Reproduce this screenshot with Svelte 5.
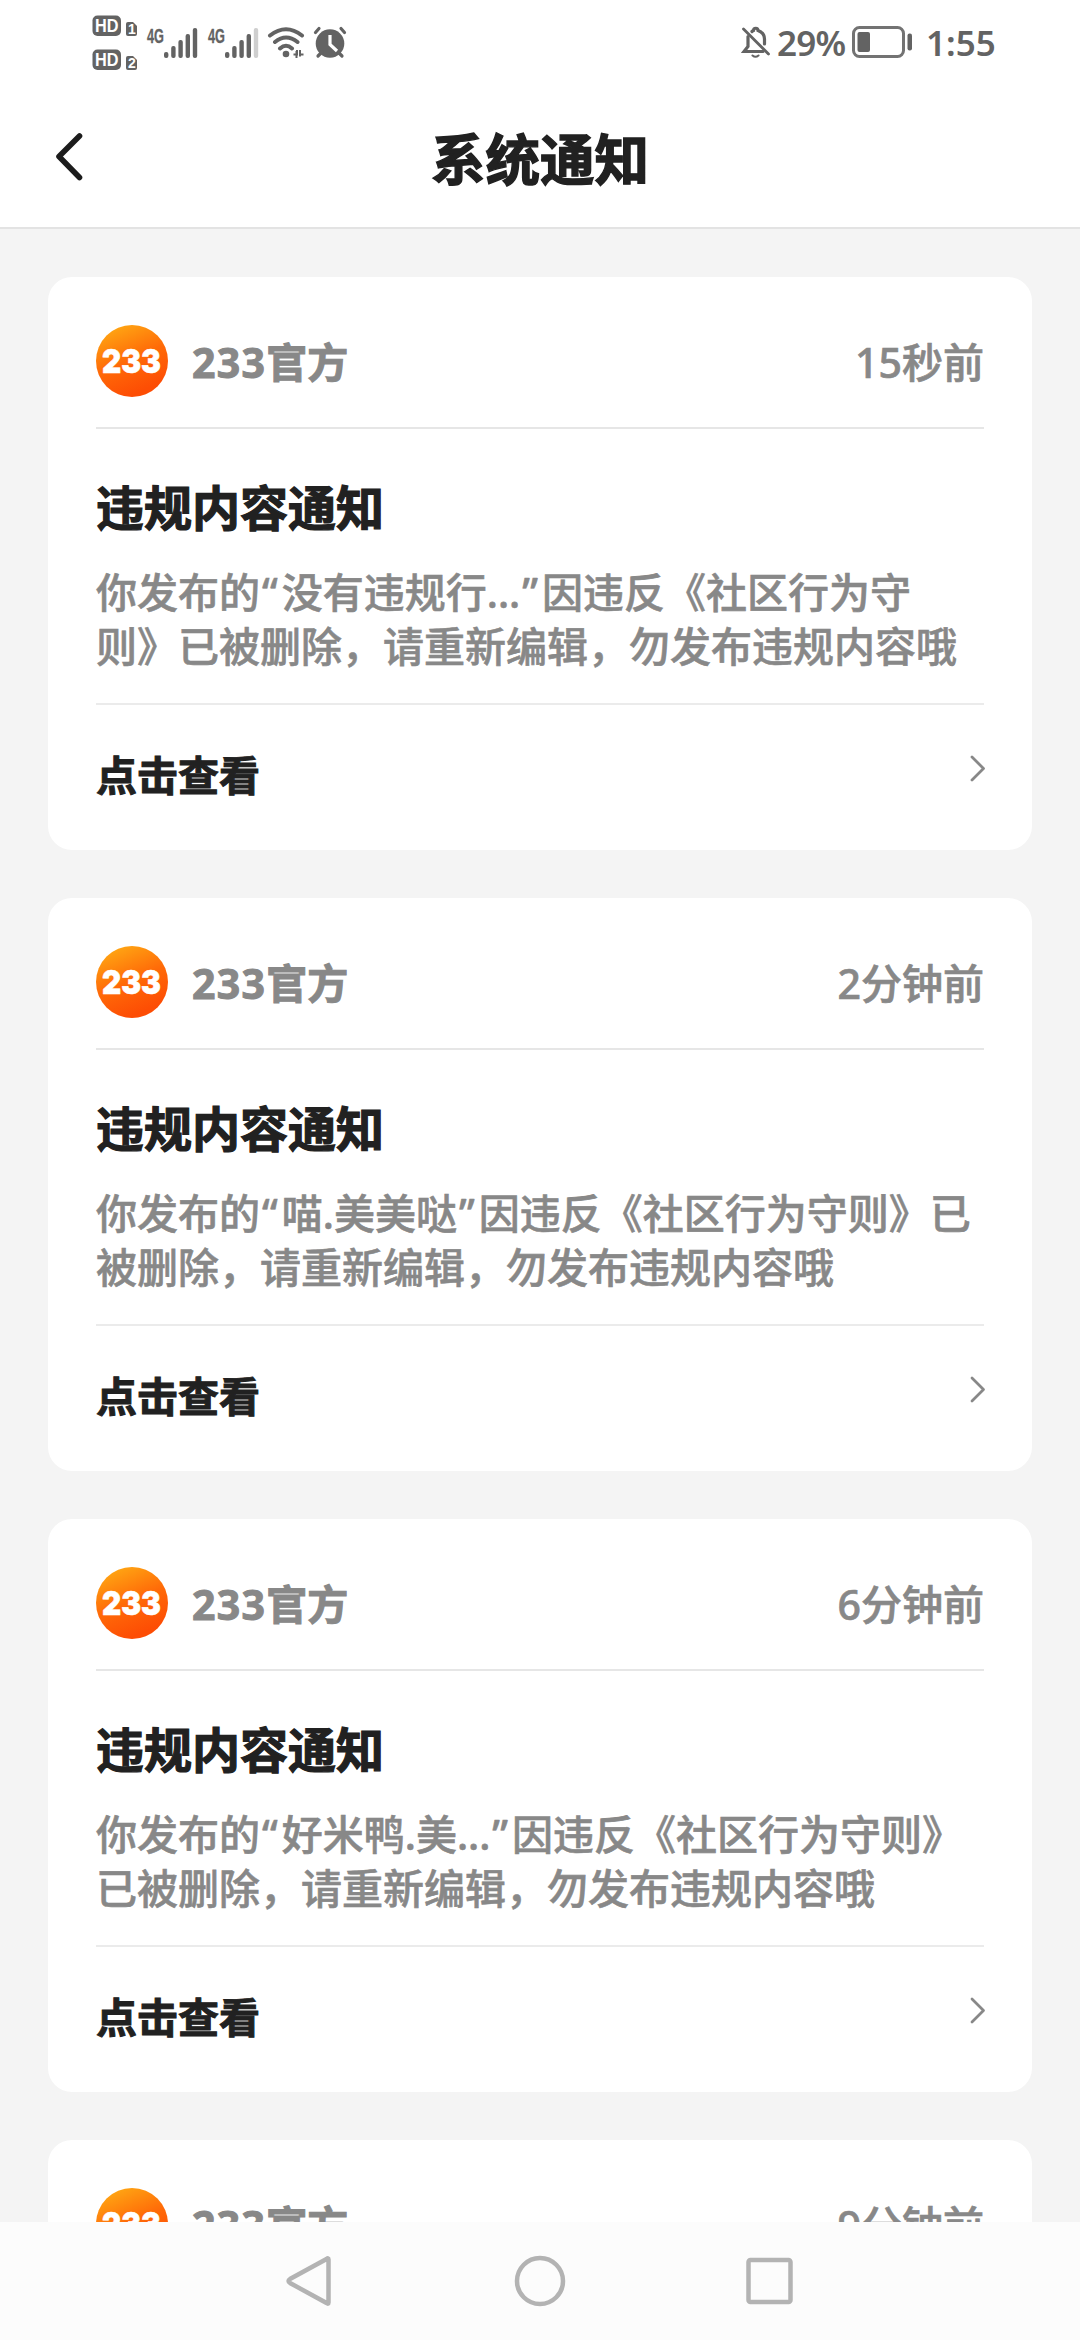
<script>
  const cards = [
    { time: '15秒前', lines: ['你发布的“没有违规行...”因违反《社区行为守', '则》已被删除，请重新编辑，勿发布违规内容哦'] },
    { time: '2分钟前', lines: ['你发布的“喵.美美哒”因违反《社区行为守则》已', '被删除，请重新编辑，勿发布违规内容哦'] },
    { time: '6分钟前', lines: ['你发布的“好米鸭.美...”因违反《社区行为守则》', '已被删除，请重新编辑，勿发布违规内容哦'] },
    { time: '9分钟前', lines: [] }
  ];
  const bars = [0, 1, 2, 3, 4];
  const parts = (line) => line.split(/([“”])/).filter(Boolean);
  const isQuote = (s) => s === '“' || s === '”';
</script>

{#snippet signal(weak)}
  <svg class="signal" width="54" height="34" viewBox="0 0 54 34">
    <text class="net" x="1" y="17.5" textLength="17" lengthAdjust="spacingAndGlyphs">4G</text>
    {#each bars as i}
      <rect x={18 + i * 7.2} y={27 - i * 6} width="4.4" height={6 + i * 6} rx="2" fill={weak && i === 4 ? '#cfcfcf' : '#636363'} />
    {/each}
  </svg>
{/snippet}

<div class="screen">
  <header class="status">
    <div class="group">
      <svg class="hd" width="44" height="56" viewBox="0 0 44 56">
        {#each ['1', '2'] as n, i}
          <g transform="translate(0 {i * 34})">
            <rect x="0.5" y="0.5" width="28.5" height="20.5" rx="5" fill="#636363" />
            <text class="hdt" x="3" y="17" textLength="23.5" lengthAdjust="spacingAndGlyphs">HD</text>
            <path d="M36 7h5l4 4v8a2 2 0 0 1-2 2h-7a2 2 0 0 1-2-2v-10a2 2 0 0 1 2-2z" fill="#636363" />
            <text class="sim" x="36" y="19">{n}</text>
          </g>
        {/each}
      </svg>
      {@render signal(false)}
      {@render signal(true)}
      <svg class="wifi" width="38" height="34" viewBox="0 0 38 34" fill="none" stroke="#636363" stroke-width="4" stroke-linecap="round">
        <path d="M3 10.5Q19-2 35 10.5M8 17Q19 8 30.5 17M13 23.5Q19 18 25 23.5" />
        <circle cx="19" cy="29" r="3.3" fill="#636363" stroke="none" />
        <path d="M26.5 29.5h3.500v-4.500M29.500 26v7M33 25v6.500M33 29.500h3.500" stroke-width="2" stroke-linecap="butt" />
      </svg>
      <svg class="alarm" width="34" height="34" viewBox="0 0 34 34" fill="none" stroke="#636363" stroke-width="3.200" stroke-linecap="round">
        <circle cx="17" cy="18.500" r="14.300" fill="#636363" stroke="none" />
        <path d="M2.500 7.500L6 3.500M31.500 7.500L28 3.500M5 31l4-4M29 31l-4-4" />
        <path d="M17 10v9.500l7 6.500" stroke="#fff" stroke-width="3.200" stroke-linecap="butt" />
      </svg>
    </div>
    <div class="group">
      <svg width="30" height="34" viewBox="0 0 30 34" fill="none" stroke="#636363" stroke-width="3.200" stroke-linecap="round">
        <path d="M7 11.500V21.500L3 26.500H22M11 6.500C11.500 6 12 5.700 12.500 5.500C12.500 2.500 17 2.500 17 5.500C21 7 23.500 10 23.500 14V19" />
        <path d="M2.500 4L27.500 29" stroke-width="2.800" />
        <path d="M11.500 30.500Q14.500 33 17.500 30.500" stroke-width="2" />
      </svg>
      <span class="pct">29%</span>
      <svg class="battery" width="62" height="34" viewBox="0 0 62 34">
        <rect x="2.500" y="2.500" width="50" height="29" rx="6" fill="none" stroke="#737373" stroke-width="3" />
        <rect x="6.500" y="7" width="12.500" height="20" rx="2" fill="#636363" />
        <rect x="56.500" y="8.500" width="4.500" height="17" rx="2" fill="#636363" />
      </svg>
      <span class="clock">1:55</span>
    </div>
  </header>

  <nav class="titlebar">
    <svg class="back" width="30" height="52" viewBox="0 0 30 52">
      <path d="M25.500 5L5 25.500L25.500 46.500" fill="none" stroke="#1c1c1c" stroke-width="5.600" stroke-linecap="round" stroke-linejoin="round" />
    </svg>
    <h1>系统通知</h1>
  </nav>

  <main>
    {#each cards as card}
      <article class="card">
        <div class="head">
          <svg class="avatar" width="72" height="72" viewBox="0 0 72 72">
            <defs>
              <linearGradient id="orange" x1="0.150" y1="0" x2="0.550" y2="0.950">
                <stop offset="0" stop-color="#ffad14" />
                <stop offset="0.550" stop-color="#ff6a08" />
                <stop offset="1" stop-color="#fd4d04" />
              </linearGradient>
            </defs>
            <circle cx="36" cy="36" r="36" fill="url(#orange)" />
            <text class="logo" x="6" y="48" textLength="59" lengthAdjust="spacingAndGlyphs">233</text>
          </svg>
          <span class="name"><b>233</b>官方</span>
          <time>{card.time}</time>
        </div>
        {#if card.lines.length}
          <div class="body">
            <h2>违规内容通知</h2>
            <p>{#each card.lines as line}<span class="line">{#each parts(line) as part}<span class:quote={isQuote(part)}>{part}</span>{/each}</span>{/each}</p>
          </div>
          <div class="foot">
            <span>点击查看</span>
            <svg class="more" width="18" height="30" viewBox="0 0 18 30">
              <path d="M4 4L15.500 15.500L4 27" fill="none" stroke="#888" stroke-width="2.800" stroke-linecap="round" stroke-linejoin="round" />
            </svg>
          </div>
        {/if}
      </article>
    {/each}
  </main>

  <footer>
    <svg width="52" height="52" viewBox="0 0 52 52"><path d="M44.500 4.500V47.500Q44.500 49.500 42.500 48L6 28Q3 26 6 24L42.500 4Q44.500 2.500 44.500 4.500Z" /></svg>
    <svg width="52" height="52" viewBox="0 0 52 52"><circle cx="26" cy="26" r="23" /></svg>
    <svg width="52" height="52" viewBox="0 0 52 52"><rect x="4.500" y="5" width="42" height="42" rx="2" /></svg>
  </footer>
</div>

<style>
  :global(body) { margin: 0; }
  .screen {
    width: 1080px; height: 2340px; overflow: hidden;
    display: flex; flex-direction: column;
    background: #f4f4f4; color: #212121;
    font-family: "Noto Sans", "Noto Sans CJK SC", sans-serif;
  }
  .status {
    height: 84px; flex: none; box-sizing: border-box; background: #fff; color: #636363;
    display: flex; justify-content: space-between; padding: 0 86px 0 92px;
  }
  .group { display: flex; align-items: center; }
  .hd { overflow: visible; margin-right: 10px; margin-top: 2px; }
  .signal { margin-right: 7px; }
  .wifi { margin-right: 8px; margin-left: -1px; }
  .net { font: 700 20px "Liberation Sans", sans-serif; fill: #636363; stroke: #636363; stroke-width: 0.3px; }
  .hdt { font: 700 19px "Liberation Sans", sans-serif; fill: #fff; }
  .sim { font: 700 14px "Liberation Sans", sans-serif; fill: #fff; }
  .pct, .clock { font-size: 35px; font-weight: 600; line-height: 44px; margin-top: 2px; white-space: nowrap; }
  .pct { width: 74px; margin-left: 6px; letter-spacing: -0.8px; }
  .clock { width: 68px; margin-left: 13px; }
  .titlebar {
    height: 145px; flex: none; box-sizing: border-box; background: #fff; border-bottom: 2px solid #e3e3e3;
    display: grid; grid-template-columns: 30px 1fr 30px; padding: 0 54px;
  }
  .back { margin-top: 47px; }
  h1 {
    margin: 36.500px 0 0; text-align: center; font-size: 54.500px; line-height: 76px; font-weight: 700;
    -webkit-text-stroke: 1.400px #212121;
  }
  main { flex: 1; min-height: 0; overflow: hidden; padding: 48px 48px 0; display: flex; flex-direction: column; gap: 48px; }
  .card { height: 573px; flex: none; box-sizing: border-box; background: #fff; border-radius: 24px; padding: 0 48px; }
  .head { height: 152px; box-sizing: border-box; border-bottom: 2px solid #e6e6e6; display: flex; align-items: center; }
  .avatar { margin: 18px 24px 0 0; }
  .logo { font: 900 33px Inter, sans-serif; fill: #fff; stroke: #fff; stroke-width: 0.600px; }
  .name, time { color: #888; font-size: 41px; line-height: 60px; margin-top: 20px; }
  .name { font-weight: 700; -webkit-text-stroke: 1px #888; }
  .name b { font-weight: 700; letter-spacing: 1.300px; }
  time { margin-left: auto; font-weight: 500; -webkit-text-stroke: 0.700px #888; }
  .body { height: 276px; box-sizing: border-box; padding-top: 44px; border-bottom: 2px solid #ebebeb; }
  h2 { margin: 0; font-size: 48px; line-height: 70px; font-weight: 700; -webkit-text-stroke: 1.200px #212121; }
  p { margin: 22px 0 0; color: #888; font-size: 41px; line-height: 54px; font-weight: 500; -webkit-text-stroke: 0.600px #888; }
  .line { display: block; white-space: nowrap; }
  .quote { padding: 0 4px 0 2px; }
  .foot { height: 145px; display: flex; justify-content: space-between; padding-top: 40px; box-sizing: border-box; }
  .foot span { font-size: 41px; line-height: 60px; font-weight: 700; -webkit-text-stroke: 1px #212121; }
  .more { margin-top: 8px; margin-right: -2px; }
  footer { height: 118px; flex: none; background: #fcfcfc; display: flex; justify-content: center; align-items: center; gap: 178px; }
  footer svg { fill: none; stroke: #b3b3b3; stroke-width: 4.500px; }
</style>
